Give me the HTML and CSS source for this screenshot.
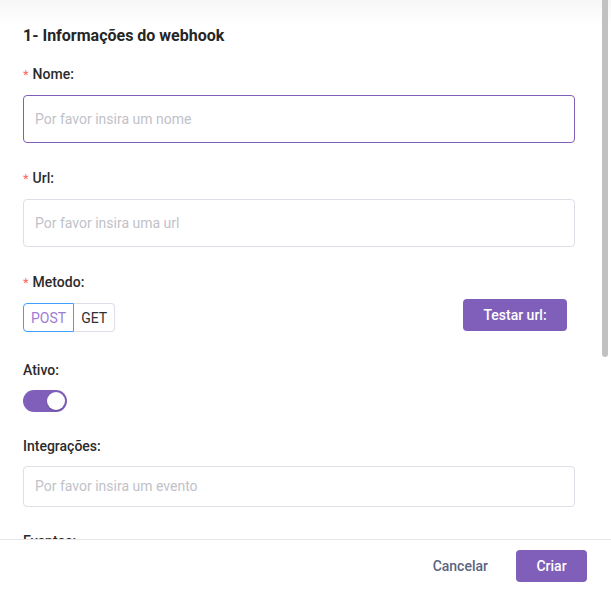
FILE: index.html
```html
<!DOCTYPE html>
<html lang="pt">
<head>
<meta charset="utf-8">
<title>Webhook</title>
<link rel="stylesheet" href="styles.css">
</head>
<body>
<div class="dialog">
  <div class="body">
    <h2 class="title">1- Informações do webhook</h2>

    <div class="item item-input">
      <label class="label"><span class="req">*</span>Nome:</label>
      <div class="input focused">Por favor insira um nome</div>
    </div>

    <div class="item item-input">
      <label class="label"><span class="req">*</span>Url:</label>
      <div class="input">Por favor insira uma url</div>
    </div>

    <div class="item item-method">
      <label class="label"><span class="req">*</span>Metodo:</label>
      <div class="method-row">
        <div class="radio-group">
          <span class="radio active">POST</span>
          <span class="radio">GET</span>
        </div>
        <button class="btn-primary btn-test">Testar url:</button>
      </div>
    </div>

    <div class="item item-small">
      <label class="label label-plain">Ativo:</label>
      <div class="switch"><span class="knob"></span></div>
    </div>

    <div class="item item-small">
      <label class="label label-plain">Integrações:</label>
      <div class="input input-short">Por favor insira um evento</div>
    </div>

    <div class="item">
      <label class="label label-plain">Eventos:</label>
    </div>
  </div>
  <div class="footer">
    <button class="btn-text">Cancelar</button>
    <button class="btn-primary btn-create">Criar</button>
  </div>
  <div class="scroll-thumb"></div>
</div>
</body>
</html>
```

FILE: styles.css
```css
* { box-sizing: border-box; }

html, body {
  margin: 0;
  padding: 0;
  background: #fff;
}

body {
  font-family: Roboto, "Liberation Sans", sans-serif;
  color: #262626;
}

.dialog {
  position: relative;
  width: 611px;
  height: 592px;
  display: flex;
  flex-direction: column;
  overflow: hidden;
}

.body {
  flex: 1;
  overflow: hidden;
  padding: 24.5px 36px 0 23px;
  background: linear-gradient(#f6f6f6 0px, #fbfbfb 12px, #ffffff 26px);
}

.title {
  margin: 0 0 17.5px;
  font-size: 16px;
  line-height: 22px;
  font-weight: 700;
  color: #262626;
}

.item {
  display: flex;
  flex-direction: column;
  align-items: flex-start;
}

.item-input { margin-bottom: 25px; }
.item-method { margin-bottom: 27.5px; }
.item-small { margin-bottom: 24px; }

.label {
  font-size: 14px;
  line-height: 20px;
  height: 20px;
  font-weight: 500;
  color: #2b2b2b;
  margin-bottom: 11px;
  display: flex;
  align-items: baseline;
  overflow: visible;
}

.label-plain { margin-bottom: 10px; }

.req {
  color: #f56c6c;
  font-weight: 400;
  font-size: 13px;
  line-height: 20px;
  margin-right: 4px;
}

.input {
  width: 100%;
  height: 48px;
  border: 1px solid #dcdfe6;
  border-radius: 4px;
  padding: 0 11px;
  display: flex;
  align-items: center;
  font-size: 14px;
  color: #bfc2c9;
}

.input.focused { border-color: #7f5fba; }

.input-short { height: 41px; }

.method-row {
  width: 100%;
  display: flex;
  justify-content: space-between;
  align-items: flex-start;
  padding-right: 8px;
}

.radio-group {
  display: flex;
}

.radio {
  height: 29px;
  display: flex;
  align-items: center;
  padding: 0 7px;
  font-size: 14px;
  color: #303133;
  border: 1px solid #dcdfe6;
}

.radio:first-child {
  border-radius: 4px 0 0 4px;
}

.radio:last-child {
  border-left: none;
  border-radius: 0 4px 4px 0;
}

.radio.active {
  border-color: #409eff;
  color: #9d7cd6;
}

.btn-primary {
  font-family: inherit;
  border: none;
  background: #7f5fba;
  color: #fff;
  border-radius: 4px;
  font-size: 14px;
  font-weight: 500;
  height: 32px;
  cursor: pointer;
}

.btn-test {
  width: 104px;
  margin-top: -4px;
}

.switch {
  position: relative;
  width: 44px;
  height: 22px;
  border-radius: 11px;
  background: #7f5fba;
}

.knob {
  position: absolute;
  right: 2px;
  top: 2px;
  width: 18px;
  height: 18px;
  border-radius: 50%;
  background: #fff;
  box-shadow: 0 1px 2px rgba(0, 0, 0, 0.2);
}

.footer {
  flex: none;
  height: 53px;
  border-top: 1px solid #e6e6e6;
  display: flex;
  justify-content: flex-end;
  align-items: center;
  padding: 0 24px 0 0;
  gap: 28px;
  background: #fff;
}

.btn-text {
  font-family: inherit;
  border: none;
  background: none;
  padding: 0;
  font-size: 14px;
  font-weight: 500;
  color: #5b6480;
}

.btn-create {
  width: 71px;
}

.scroll-thumb {
  position: absolute;
  left: 602px;
  top: 0;
  width: 6px;
  height: 357px;
  border-radius: 0 0 3px 3px;
  background: #c1c1c1;
}
```
